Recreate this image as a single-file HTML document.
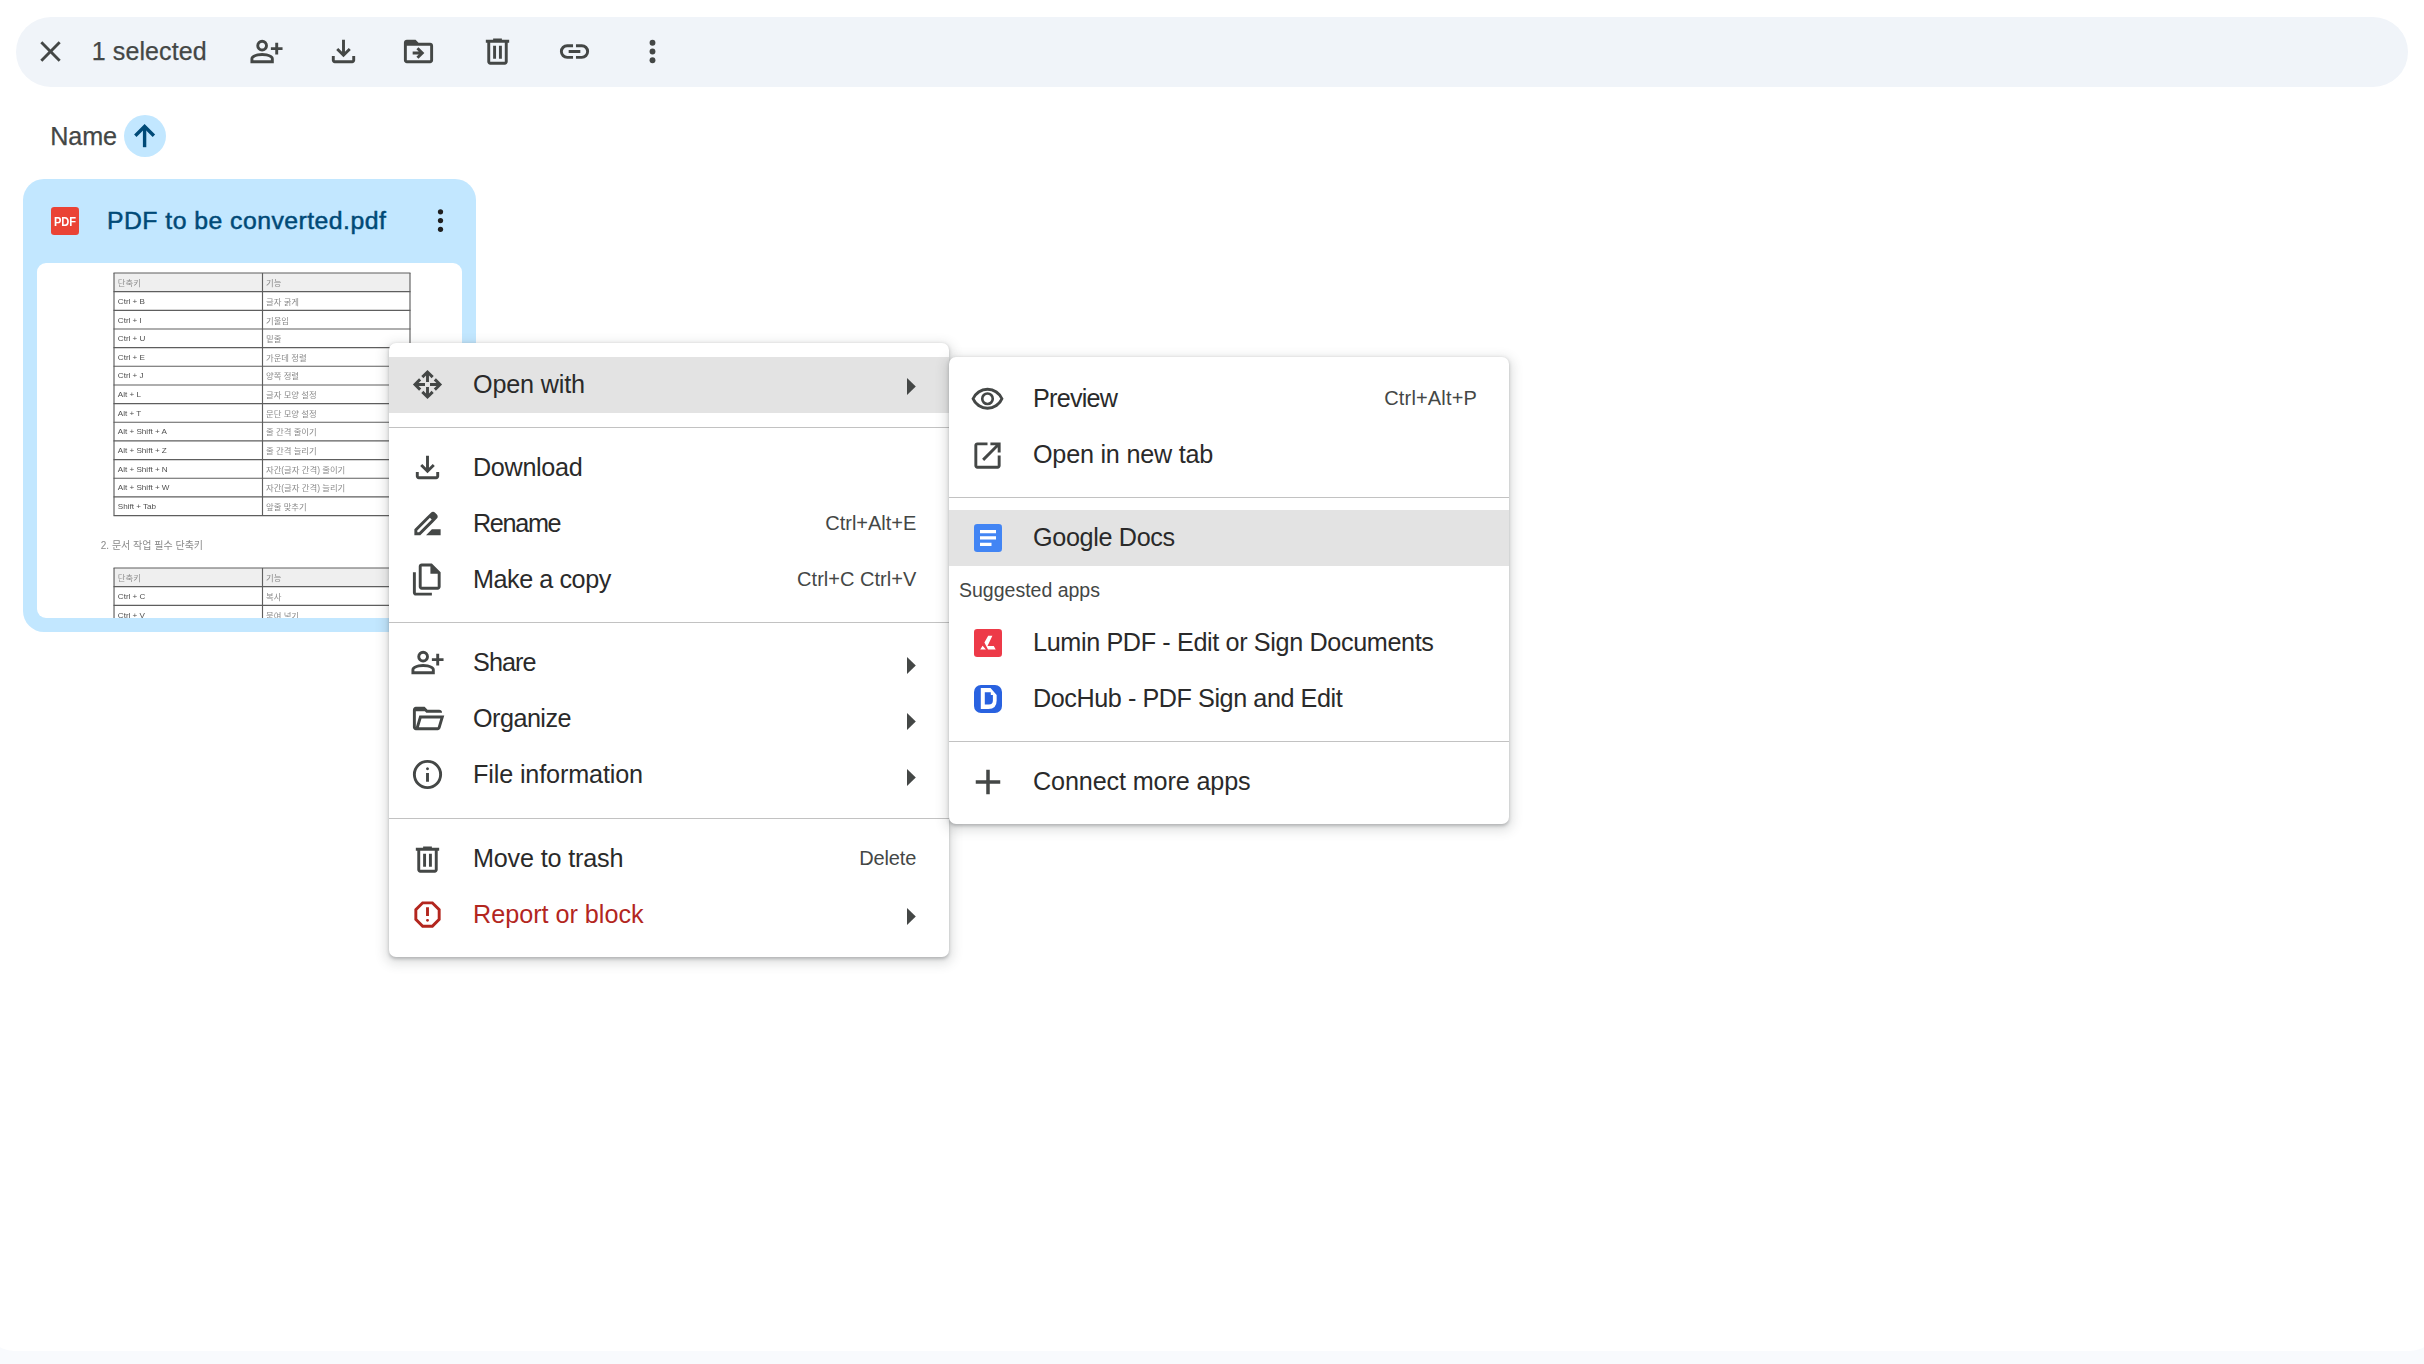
<!DOCTYPE html>
<html lang="en"><head><meta charset="utf-8"><title>My Drive - Google Drive</title>
<style>
html,body{margin:0;padding:0;background:#fff;}
body{width:2424px;height:1364px;position:relative;overflow:hidden;font-family:"Liberation Sans","Noto Sans CJK KR",sans-serif;}
.t{position:absolute;white-space:nowrap;line-height:40px;height:40px;}
.ic{position:absolute;display:block;overflow:visible;}
.abs{position:absolute;}
.menu{position:absolute;background:#fff;border-radius:7px;box-shadow:0 3.5px 10.5px 3.5px rgba(60,64,67,.15),0 1.75px 3.5px 0 rgba(60,64,67,.3);}
.hl{position:absolute;background:#e3e3e3;}
.dv{position:absolute;height:1px;background:#c2c2c2;}
.th{position:absolute;white-space:nowrap;font-size:8.35px;line-height:10px;height:10px;}
</style></head><body>

<div class="abs" style="left:0;top:1300px;width:2424px;height:64px;background:#f8fafd"></div>
<div class="abs" style="left:-14px;top:0;width:2452px;height:1351.3px;border-radius:0 0 28px 28px;background:#fff"></div>
<div class="abs" style="left:16px;top:17px;width:2392px;height:70px;border-radius:35px;background:#f0f4f9"></div>
<svg class="ic" style="left:33.00px;top:33.90px" width="35" height="35" viewBox="0 -960 960 960"><path fill="#444746" d="M256-200l-56-56 224-224-224-224 56-56 224 224 224-224 56 56-224 224 224 224-56 56-224-224-224 224Z"/></svg>
<div id="sel" class="t" style="left:91.8px;top:31.0px;font-size:25px;color:#444746;font-weight:400;letter-spacing:0.1px;-webkit-text-stroke:0.25px #444746;">1 selected</div>
<svg class="ic" style="left:249.00px;top:33.90px" width="35" height="35" viewBox="0 -960 960 960"><path fill="#444746" d="M720-400v-120H600v-80h120v-120h80v120h120v80H800v120h-80Zm-360-80q-66 0-113-47t-47-113q0-66 47-113t113-47q66 0 113 47t47 113q0 66-47 113t-113 47ZM40-160v-112q0-34 17.500-62.500T104-378q62-31 126-46.500T360-440q66 0 130 15.500T616-378q29 15 46.500 43.500T680-272v112H40Zm80-80h480v-32q0-11-5.500-20T580-306q-54-27-109-40.500T360-360q-56 0-111 13.500T140-306q-9 5-14.500 14t-5.500 20v32Zm240-320q33 0 56.500-23.500T440-640q0-33-23.500-56.500T360-720q-33 0-56.500 23.500T280-640q0 33 23.500 56.500T360-560Zm0-80Zm0 400Z"/></svg>
<svg class="ic" style="left:326.20px;top:33.90px" width="35" height="35" viewBox="0 -960 960 960"><path fill="#444746" d="M480-320 280-520l56-58 104 104v-326h80v326l104-104 56 58-200 200ZM240-160q-33 0-56.500-23.500T160-240v-120h80v120h480v-120h80v120q0 33-23.500 56.500T720-160H240Z"/></svg>
<svg class="ic" style="left:401.1px;top:33.9px" width="35" height="35" viewBox="0 0 24 24"><path fill="#444746" d="M20 6h-8l-2-2H4c-1.100 0-2 .900-2 2v12c0 1.100.900 2 2 2h16c1.100 0 2-.900 2-2V8c0-1.100-.900-2-2-2zm0 12H4V8h16v10zm-8.010-9l-1.410 1.410L12.160 12H8v2h4.160l-1.590 1.590L11.990 17 16 13.010 11.990 9z"/></svg>
<svg class="ic" style="left:480.10px;top:33.90px" width="35" height="35" viewBox="0 -960 960 960"><path fill="#444746" d="M280-120q-33 0-56.500-23.500T200-200v-520h-40v-80h200v-40h240v40h200v80h-40v520q0 33-23.500 56.500T680-120H280Zm400-600H280v520h400v-520ZM360-280h80v-360h-80v360Zm160 0h80v-360h-80v360ZM280-720v520-520Z"/></svg>
<svg class="ic" style="left:557.40px;top:33.90px" width="35" height="35" viewBox="0 -960 960 960"><path fill="#444746" d="M440-280H280q-83 0-141.500-58.500T80-480q0-83 58.500-141.500T280-680h160v80H280q-50 0-85 35t-35 85q0 50 35 85t85 35h160v80ZM320-440v-80h320v80H320Zm200 160v-80h160q50 0 85-35t35-85q0-50-35-85t-85-35H520v-80h160q83 0 141.500 58.500T880-480q0 83-58.500 141.500T680-280H520Z"/></svg>

<svg class="ic" style="left:634.9px;top:33.9px" width="35" height="35" viewBox="0 0 24 24"><g fill="#444746"><circle cx="12" cy="6" r="2"/><circle cx="12" cy="12" r="2"/><circle cx="12" cy="18" r="2"/></g></svg>
<div id="name" class="t" style="left:50.3px;top:116.4px;font-size:25.2px;color:#444746;font-weight:400;letter-spacing:-0.12px;-webkit-text-stroke:0.25px #444746;">Name</div>
<div class="abs" style="left:124px;top:115px;width:42px;height:42px;border-radius:50%;background:#c2e7ff"></div>
<svg class="ic" style="left:124px;top:115px" width="42" height="42" viewBox="124 115 42 42"><g fill="none" stroke="#004a77" stroke-width="3.400" stroke-linejoin="miter"><path d="M135.300 135.800L144.600 126.500L153.900 135.800"/><path d="M144.600 127V147.200"/></g></svg>
<div class="abs" style="left:23px;top:179px;width:453px;height:453px;border-radius:21px;background:#c2e7ff"></div>
<div class="abs" style="left:51.2px;top:207.2px;width:27.7px;height:27.7px;border-radius:3.2px;background:#ea4335"></div>
<div id="pdfi" class="t" style="left:45px;top:207.7px;width:40px;height:27.7px;line-height:27.700px;text-align:center;font-size:12.9px;font-weight:700;color:#fff;transform:scaleX(0.860);transform-origin:50% 50%">PDF</div>
<div id="fname" class="t" style="left:107.0px;top:201.1px;font-size:24.8px;color:#004a77;font-weight:400;letter-spacing:0.455px;-webkit-text-stroke:0.5px #004a77;">PDF to be converted.pdf</div>
<svg class="ic" style="left:423.2px;top:203.3px" width="35" height="35" viewBox="0 0 24 24"><g fill="#1f1f1f"><circle cx="12" cy="6" r="1.8"/><circle cx="12" cy="12" r="1.8"/><circle cx="12" cy="18" r="1.8"/></g></svg>
<div class="abs" style="left:36.7px;top:263.4px;width:425.3px;height:354.6px;border-radius:9px;background:#fff;overflow:hidden">
<div class="abs" style="left:0;top:0;width:100%;height:100%;filter:blur(0.35px)">
<div class="abs" style="left:77.3px;top:9.9px;width:296.0px;height:18.7px;background:#efefef"></div><div class="th" style="left:81.1px;top:14.8px;color:#909090;">단축키</div><div class="th" style="left:229.3px;top:14.8px;color:#8a8a8a">기능</div><div class="th" style="left:81.1px;top:33.5px;color:#4f4f4f;font-size:8.1px;">Ctrl + B</div><div class="th" style="left:229.3px;top:33.5px;color:#8a8a8a">글자 굵게</div><div class="th" style="left:81.1px;top:52.2px;color:#4f4f4f;font-size:8.1px;">Ctrl + I</div><div class="th" style="left:229.3px;top:52.2px;color:#8a8a8a">기울임</div><div class="th" style="left:81.1px;top:70.8px;color:#4f4f4f;font-size:8.1px;">Ctrl + U</div><div class="th" style="left:229.3px;top:70.8px;color:#8a8a8a">밑줄</div><div class="th" style="left:81.1px;top:89.5px;color:#4f4f4f;font-size:8.1px;">Ctrl + E</div><div class="th" style="left:229.3px;top:89.5px;color:#8a8a8a">가운데 정렬</div><div class="th" style="left:81.1px;top:108.1px;color:#4f4f4f;font-size:8.1px;">Ctrl + J</div><div class="th" style="left:229.3px;top:108.1px;color:#8a8a8a">양쪽 정렬</div><div class="th" style="left:81.1px;top:126.8px;color:#4f4f4f;font-size:8.1px;">Alt + L</div><div class="th" style="left:229.3px;top:126.8px;color:#8a8a8a">글자 모양 설정</div><div class="th" style="left:81.1px;top:145.5px;color:#4f4f4f;font-size:8.1px;">Alt + T</div><div class="th" style="left:229.3px;top:145.5px;color:#8a8a8a">문단 모양 설정</div><div class="th" style="left:81.1px;top:164.1px;color:#4f4f4f;font-size:8.1px;">Alt + Shift + A</div><div class="th" style="left:229.3px;top:164.1px;color:#8a8a8a">줄 간격 줄이기</div><div class="th" style="left:81.1px;top:182.8px;color:#4f4f4f;font-size:8.1px;">Alt + Shift + Z</div><div class="th" style="left:229.3px;top:182.8px;color:#8a8a8a">줄 간격 늘리기</div><div class="th" style="left:81.1px;top:201.4px;color:#4f4f4f;font-size:8.1px;">Alt + Shift + N</div><div class="th" style="left:229.3px;top:201.4px;color:#8a8a8a">자간(글자 간격) 줄이기</div><div class="th" style="left:81.1px;top:220.1px;color:#4f4f4f;font-size:8.1px;">Alt + Shift + W</div><div class="th" style="left:229.3px;top:220.1px;color:#8a8a8a">자간(글자 간격) 늘리기</div><div class="th" style="left:81.1px;top:238.8px;color:#4f4f4f;font-size:8.1px;">Shift + Tab</div><div class="th" style="left:229.3px;top:238.8px;color:#8a8a8a">앞줄 맞추기</div><svg class="ic" style="left:75.30px;top:7.90px" width="300.00" height="246.58" viewBox="-2 -2 300.00 246.58"><g stroke="#5e5e5e" stroke-width="1.150" fill="none"><path d="M-0.500 0.00H296.50"/><path d="M-0.500 18.66H296.50"/><path d="M-0.500 37.32H296.50"/><path d="M-0.500 55.98H296.50"/><path d="M-0.500 74.64H296.50"/><path d="M-0.500 93.30H296.50"/><path d="M-0.500 111.96H296.50"/><path d="M-0.500 130.62H296.50"/><path d="M-0.500 149.28H296.50"/><path d="M-0.500 167.94H296.50"/><path d="M-0.500 186.60H296.50"/><path d="M-0.500 205.26H296.50"/><path d="M-0.500 223.92H296.50"/><path d="M-0.500 242.58H296.50"/><path d="M0.00 0V242.58"/><path d="M148.50 0V242.58"/><path d="M296.00 0V242.58"/></g></svg>
<div class="th" style="left:64.1px;top:277.6px;color:#8a8a8a;font-size:10px">2. 문서 작업 필수 단축키</div>
<div class="abs" style="left:77.3px;top:305.1px;width:296.0px;height:18.7px;background:#efefef"></div><div class="th" style="left:81.1px;top:310.0px;color:#909090;">단축키</div><div class="th" style="left:229.3px;top:310.0px;color:#8a8a8a">기능</div><div class="th" style="left:81.1px;top:328.7px;color:#4f4f4f;font-size:8.1px;">Ctrl + C</div><div class="th" style="left:229.3px;top:328.7px;color:#8a8a8a">복사</div><div class="th" style="left:81.1px;top:347.4px;color:#4f4f4f;font-size:8.1px;">Ctrl + V</div><div class="th" style="left:229.3px;top:347.4px;color:#8a8a8a">붙여 넣기</div><div class="th" style="left:81.1px;top:366.0px;color:#4f4f4f;font-size:8.1px;">Ctrl + X</div><div class="th" style="left:229.3px;top:366.0px;color:#8a8a8a">잘라내기</div><svg class="ic" style="left:75.30px;top:303.10px" width="300.00" height="78.64" viewBox="-2 -2 300.00 78.64"><g stroke="#5e5e5e" stroke-width="1.150" fill="none"><path d="M-0.500 0.00H296.50"/><path d="M-0.500 18.66H296.50"/><path d="M-0.500 37.32H296.50"/><path d="M-0.500 55.98H296.50"/><path d="M-0.500 74.64H296.50"/><path d="M0.00 0V74.64"/><path d="M148.50 0V74.64"/><path d="M296.00 0V74.64"/></g></svg>
</div></div>
<div class="menu" style="left:389px;top:343px;width:560px;height:614px"></div>
<div class="hl" style="left:389px;top:357px;width:560px;height:56px"></div>
<div class="dv" style="left:389px;top:427px;width:560px"></div>
<div class="dv" style="left:389px;top:622px;width:560px"></div>
<div class="dv" style="left:389px;top:818px;width:560px"></div>
<svg class="ic" style="left:409.90px;top:367.30px" width="35" height="35" viewBox="0 -960 960 960"><path fill="#444746" d="M480-80 310-250l57-57 73 73v-206H235l73 72-58 58L80-480l169-169 57 57-72 72h206v-206l-73 73-57-57 170-170 170 170-57 57-73-73v206h205l-73-72 58-58 170 170-170 170-57-57 73-73H520v205l72-73 58 58L480-80Z"/></svg>
<div class="abs" style="left:425.0px;top:382.4px;width:4.800px;height:4.800px;background:#e3e3e3"></div>
<div id="m_open" class="t" style="left:473.0px;top:364.4px;font-size:25.2px;color:#2a2a2a;font-weight:400;letter-spacing:-0.175px;">Open with</div>
<svg class="ic" style="left:907.10px;top:378.00px" width="8.8" height="17.0" viewBox="0 0 8.8 17.0"><path fill="#444746" d="M0 0L8.8 8.5L0 17.0Z"/></svg>
<svg class="ic" style="left:409.90px;top:450.30px" width="35" height="35" viewBox="0 -960 960 960"><path fill="#444746" d="M480-320 280-520l56-58 104 104v-326h80v326l104-104 56 58-200 200ZM240-160q-33 0-56.500-23.500T160-240v-120h80v120h480v-120h80v120q0 33-23.500 56.500T720-160H240Z"/></svg>
<div id="m_dl" class="t" style="left:473.0px;top:446.9px;font-size:25.2px;color:#2a2a2a;font-weight:400;letter-spacing:-0.329px;">Download</div>
<svg class="ic" style="left:409.90px;top:506.30px" width="35" height="35" viewBox="0 0 24 24"><path fill="#444746" d="M18.410 5.800 17.200 4.590c-.780-.780-2.050-.780-2.830 0l-2.680 2.680L3 15.960V20h4.040l8.740-8.740 2.630-2.630c.790-.780.790-2.050 0-2.830ZM6.210 18H5v-1.210l8.660-8.660 1.210 1.210L6.210 18ZM11 20l4-4h6v4H11Z"/></svg>
<div id="m_ren" class="t" style="left:473.0px;top:502.9px;font-size:25.2px;color:#2a2a2a;font-weight:400;letter-spacing:-1.32px;">Rename</div>
<div id="m_ren_sc" class="t" style="right:1507.71px;top:503.0px;font-size:20px;color:#444746;font-weight:400;letter-spacing:-0.011px;">Ctrl+Alt+E</div>
<svg class="ic" style="left:409.90px;top:562.30px" width="35" height="35" viewBox="0 -960 960 960"><path fill="#444746" d="M760-200H320q-33 0-56.500-23.500T240-280v-560q0-33 23.500-56.500T320-920h280l240 240v400q0 33-23.500 56.500T760-200ZM560-640v-200H320v560h440v-360H560ZM160-40q-33 0-56.500-23.500T80-120v-560h80v560h440v80H160Zm160-800v200-200 560-560Z"/></svg>
<div id="m_copy" class="t" style="left:473.0px;top:558.9px;font-size:25.2px;color:#2a2a2a;font-weight:400;letter-spacing:-0.45px;">Make a copy</div>
<div id="m_copy_sc" class="t" style="right:1507.67px;top:559.0px;font-size:20px;color:#444746;font-weight:400;letter-spacing:0.025px;">Ctrl+C Ctrl+V</div>
<svg class="ic" style="left:409.90px;top:645.30px" width="35" height="35" viewBox="0 -960 960 960"><path fill="#444746" d="M720-400v-120H600v-80h120v-120h80v120h120v80H800v120h-80Zm-360-80q-66 0-113-47t-47-113q0-66 47-113t113-47q66 0 113 47t47 113q0 66-47 113t-113 47ZM40-160v-112q0-34 17.500-62.500T104-378q62-31 126-46.500T360-440q66 0 130 15.500T616-378q29 15 46.500 43.500T680-272v112H40Zm80-80h480v-32q0-11-5.500-20T580-306q-54-27-109-40.500T360-360q-56 0-111 13.500T140-306q-9 5-14.500 14t-5.500 20v32Zm240-320q33 0 56.500-23.500T440-640q0-33-23.500-56.500T360-720q-33 0-56.500 23.500T280-640q0 33 23.500 56.500T360-560Zm0-80Zm0 400Z"/></svg>
<div id="m_share" class="t" style="left:473.0px;top:641.9px;font-size:25.2px;color:#2a2a2a;font-weight:400;letter-spacing:-0.9px;">Share</div>
<svg class="ic" style="left:907.10px;top:657.20px" width="8.8" height="17.0" viewBox="0 0 8.8 17.0"><path fill="#444746" d="M0 0L8.8 8.5L0 17.0Z"/></svg>
<svg class="ic" style="left:409.90px;top:701.30px" width="35" height="35" viewBox="0 -960 960 960"><path fill="#444746" d="M160-720h207l40 40H160ZM160-160q-33 0-56.500-23.500T80-240v-480q0-33 23.500-56.500T160-800h240l80 80h320q33 0 56.500 23.500T880-640H447l-80-80H160v480l96-320h684L837-217q-8 26-29.500 41.500T760-160H160Zm84-80h516l72-240H316l-72 240Zm0 0 72-240-72 240Zm-84-400v-80 80Z"/></svg>
<div id="m_org" class="t" style="left:473.0px;top:697.9px;font-size:25.2px;color:#2a2a2a;font-weight:400;letter-spacing:-0.529px;">Organize</div>
<svg class="ic" style="left:907.10px;top:713.30px" width="8.8" height="17.0" viewBox="0 0 8.8 17.0"><path fill="#444746" d="M0 0L8.8 8.5L0 17.0Z"/></svg>
<svg class="ic" style="left:409.90px;top:757.30px" width="35" height="35" viewBox="0 -960 960 960"><path fill="#444746" d="M440-280h80v-240h-80v240Zm40-320q17 0 28.500-11.500T520-640q0-17-11.500-28.500T480-680q-17 0-28.500 11.500T440-640q0 17 11.500 28.500T480-600Zm0 520q-83 0-156-31.500T197-197q-54-54-85.500-127T80-480q0-83 31.500-156T197-763q54-54 127-85.500T480-880q83 0 156 31.500T763-763q54 54 85.500 127T880-480q0 83-31.500 156T763-197q-54 54-127 85.500T480-80Zm0-80q134 0 227-93t93-227q0-134-93-227t-227-93q-134 0-227 93t-93 227q0 134 93 227t227 93Zm0-320Z"/></svg>
<div id="m_info" class="t" style="left:473.0px;top:753.9px;font-size:25.2px;color:#2a2a2a;font-weight:400;letter-spacing:-0.14px;">File information</div>
<svg class="ic" style="left:907.10px;top:769.10px" width="8.8" height="17.0" viewBox="0 0 8.8 17.0"><path fill="#444746" d="M0 0L8.8 8.5L0 17.0Z"/></svg>
<svg class="ic" style="left:409.90px;top:841.50px" width="35" height="35" viewBox="0 -960 960 960"><path fill="#444746" d="M280-120q-33 0-56.500-23.500T200-200v-520h-40v-80h200v-40h240v40h200v80h-40v520q0 33-23.500 56.500T680-120H280Zm400-600H280v520h400v-520ZM360-280h80v-360h-80v360Zm160 0h80v-360h-80v360ZM280-720v520-520Z"/></svg>
<div id="m_trash" class="t" style="left:473.0px;top:837.9px;font-size:25.2px;color:#2a2a2a;font-weight:400;letter-spacing:-0.183px;">Move to trash</div>
<div id="m_trash_sc" class="t" style="right:1507.86px;top:838.0px;font-size:20px;color:#444746;font-weight:400;letter-spacing:-0.16px;">Delete</div>
<svg class="ic" style="left:409.90px;top:897.40px" width="35" height="35" viewBox="0 -960 960 960"><path fill="#b3261e" d="M480-280q17 0 28.500-11.500T520-320q0-17-11.500-28.500T480-360q-17 0-28.500 11.500T440-320q0 17 11.500 28.500T480-280Zm-40-160h80v-240h-80v240ZM330-120 120-330v-300l210-210h300l210 210v300L630-120H330Zm34-80h232l164-164v-232L596-760H364L200-596v232l164 164Zm116-280Z"/></svg>
<div id="m_rep" class="t" style="left:473.0px;top:893.9px;font-size:25.2px;color:#b3261e;font-weight:400;letter-spacing:-0.014px;">Report or block</div>
<svg class="ic" style="left:907.10px;top:907.90px" width="8.8" height="17.0" viewBox="0 0 8.8 17.0"><path fill="#444746" d="M0 0L8.8 8.5L0 17.0Z"/></svg>
<div class="menu" style="left:949px;top:357px;width:560px;height:467px"></div>
<div class="hl" style="left:949px;top:510px;width:560px;height:56px"></div>
<div class="dv" style="left:949px;top:497px;width:560px"></div>
<div class="dv" style="left:949px;top:741px;width:560px"></div>
<svg class="ic" style="left:970.10px;top:381.50px" width="35" height="35" viewBox="0 -960 960 960"><path fill="#444746" d="M480-320q75 0 127.500-52.500T660-500q0-75-52.500-127.500T480-680q-75 0-127.500 52.500T300-500q0 75 52.500 127.500T480-320Zm0-72q-45 0-76.500-31.500T372-500q0-45 31.500-76.500T480-608q45 0 76.500 31.500T588-500q0 45-31.500 76.500T480-392Zm0 192q-146 0-266-81.500T40-500q54-137 174-218.500T480-800q146 0 266 81.500T920-500q-54 137-174 218.500T480-200Zm0-300Zm0 220q113 0 207.500-59.500T832-500q-50-101-144.500-160.500T480-720q-113 0-207.500 59.500T128-500q50 101 144.500 160.500T480-280Z"/></svg>
<div id="s_prev" class="t" style="left:1033.0px;top:377.9px;font-size:25.2px;color:#2a2a2a;font-weight:400;letter-spacing:-0.767px;">Preview</div>
<div id="s_prev_sc" class="t" style="right:947.04px;top:378.0px;font-size:20px;color:#444746;font-weight:400;letter-spacing:0.156px;">Ctrl+Alt+P</div>
<svg class="ic" style="left:970.10px;top:437.60px" width="35" height="35" viewBox="0 -960 960 960"><path fill="#444746" d="M200-120q-33 0-56.500-23.500T120-200v-560q0-33 23.500-56.500T200-840h280v80H200v560h560v-280h80v280q0 33-23.500 56.500T760-120H200Zm188-212-56-56 372-372H560v-80h280v280h-80v-144L388-332Z"/></svg>
<div id="s_newtab" class="t" style="left:1033.0px;top:433.9px;font-size:25.2px;color:#2a2a2a;font-weight:400;letter-spacing:-0.229px;">Open in new tab</div>
<svg class="ic" style="left:974px;top:524px" width="28" height="28" viewBox="0 0 28 28"><rect width="28" height="28" rx="3.200" fill="#4285f4"/><path fill="#fff" d="M6 6h16v3.300H6zM6 12.300h16v3.200H6zM6 18.700h11.500v3.200H6z"/></svg>
<div id="s_docs" class="t" style="left:1033.0px;top:517.4px;font-size:25.2px;color:#2a2a2a;font-weight:400;letter-spacing:-0.34px;">Google Docs</div>
<div id="s_sugg" class="t" style="left:959px;top:570.0px;font-size:19.5px;color:#444746;font-weight:400;letter-spacing:0.0px;">Suggested apps</div>
<svg class="ic" style="left:974px;top:629px" width="28" height="28" viewBox="0 0 28 28"><rect width="28" height="28" rx="3.200" fill="#ed3a48"/><path fill="#fff" d="M14.200 6.800H18.400L13.500 16.900H19.800L21.700 20.500H14L10.400 13.500ZM8.600 16.800 6.200 20.500H11.900Z"/></svg>
<div id="s_lumin" class="t" style="left:1033.0px;top:621.9px;font-size:25.2px;color:#2a2a2a;font-weight:400;letter-spacing:-0.364px;">Lumin PDF - Edit or Sign Documents</div>
<svg class="ic" style="left:974px;top:685px" width="28" height="28" viewBox="0 0 28 28"><rect width="28" height="28" rx="7" fill="#2962e0"/><path fill="#fff" fill-rule="evenodd" d="M6.800 2.900H16.500L22.650 10V15.600Q22.650 24.100 14.400 24.100H6.800ZM10.800 7.200H16.800V10H18.900V15.600Q18.900 19.600 14.900 19.600H10.800Z"/></svg>
<div id="s_dochub" class="t" style="left:1033.0px;top:677.9px;font-size:25.2px;color:#2a2a2a;font-weight:400;letter-spacing:-0.436px;">DocHub - PDF Sign and Edit</div>
<svg class="ic" style="left:966.50px;top:760.90px" width="42" height="42" viewBox="0 -960 960 960"><path fill="#444746" d="M440-440H200v-80h240v-240h80v240h240v80H520v240h-80v-240Z"/></svg>
<div id="s_conn" class="t" style="left:1033.0px;top:760.9px;font-size:25.2px;color:#2a2a2a;font-weight:400;letter-spacing:-0.131px;">Connect more apps</div>
</body></html>
